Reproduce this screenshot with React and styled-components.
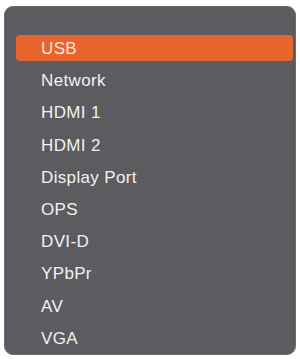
import React from 'react'
import styled, { createGlobalStyle } from 'styled-components'

const GlobalStyle = createGlobalStyle`
  html, body {
    margin: 0;
    padding: 0;
    background: #ffffff;
  }
  body {
    font-family: "Liberation Sans", Arial, sans-serif;
  }
`;

const sources = [
  'USB',
  'Network',
  'HDMI 1',
  'HDMI 2',
  'Display Port',
  'OPS',
  'DVI-D',
  'YPbPr',
  'AV',
  'VGA',
];

export default function App() {
  const active = 0;
  return (
    <>
      <GlobalStyle />
      <Page>
        <Panel>
          <List>
            {sources.map((name, i) => (
              <Item key={name} $active={i === active}>
                {name}
              </Item>
            ))}
          </List>
        </Panel>
      </Page>
    </>
  )
}

const Page = styled.div`
  width: 300px;
  height: 359px;
  padding: 6px 4px 4px 4px;
  box-sizing: border-box;
`;

const Panel = styled.div`
  width: 292px;
  height: 349px;
  box-sizing: border-box;
  background: #5c5b60;
  border: 1px solid #6b6a6f;
  border-radius: 9px;
  padding: 25px 2px 0 11px;
`;

const List = styled.ul`
  list-style: none;
  margin: 0;
  padding: 0;
  display: flex;
  flex-direction: column;
`;

const Item = styled.li`
  height: 26px;
  margin: 3.1px 0;
  display: flex;
  align-items: center;
  padding: 2px 0 0 25px;
  box-sizing: border-box;
  border-radius: 4px;
  font-size: 17px;
  letter-spacing: 0.35px;
  color: ${(p) => (p.$active ? '#fbe6d6' : '#f2f2f2')};
  background: ${(p) => (p.$active ? '#e8652e' : 'transparent')};
`;
